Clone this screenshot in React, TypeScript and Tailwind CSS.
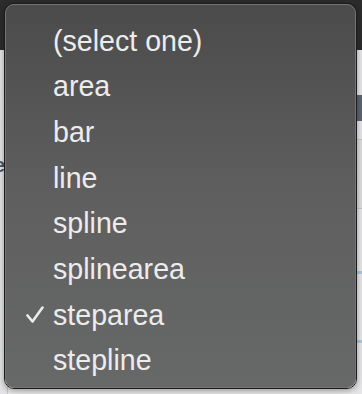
const items = [
  "(select one)",
  "area",
  "bar",
  "line",
  "spline",
  "splinearea",
  "steparea",
  "stepline",
];

const App = () => {
  const selected = "steparea";
  return (
    <div className="relative h-[394px] w-[362px] overflow-hidden bg-[#ebebeb]">
      {/* page behind the popup */}
      <div className="h-[50px] bg-[#2c2c2c]"></div>
      <div className="flex h-[344px] justify-between">
        <div className="w-[8px] border-r border-[#c9c9c9] bg-[#e4e4e6] pt-[105px] font-['Liberation_Sans',sans-serif] text-[20px] font-bold leading-none text-[#4a5566]">
          <span className="-ml-[6px]">e</span>
        </div>
        <div className="flex w-[8px] flex-col bg-[#e6e6e8]">
          <div className="mt-[45px] h-[26px] bg-[#5c6470]"></div>
          <div className="mt-[18px] h-[70px] border-y border-[#c4c4c4] bg-[#dcdcdc]"></div>
          <div className="mt-[62px] h-[3px] bg-[#a9c8df]"></div>
          <div className="mt-[66px] h-[3px] bg-[#a9c8df]"></div>
        </div>
      </div>

      {/* popup menu */}
      <div className="absolute left-[4px] top-[3px] h-[386px] w-[353px] rounded-[10px] border border-[#1c1c1c] shadow-[0_2px_6px_rgba(0,0,0,0.35)]">
        <div className="h-full w-full rounded-[9px] border border-[#747474] bg-gradient-to-b from-[#4b4b4b] via-[#5f5f5f] to-[#676868] pt-[13px] font-['Liberation_Sans',sans-serif]">
          {items.map((item) => (
            <div key={item} className="relative flex h-[45.7px] items-center pl-[47px] text-[28.6px] leading-none text-[#ececec]">
              {item === selected && (
                <svg className="absolute left-[20px] top-[14px]" width="18" height="18" viewBox="0 0 18 18" fill="none">
                  <path d="M1.5 9.5 L6.5 15.5 L16.5 1.5" stroke="#ececec" strokeWidth="2.6" strokeLinecap="round" strokeLinejoin="round" />
                </svg>
              )}
              <span>{item}</span>
            </div>
          ))}
        </div>
      </div>
    </div>
  );
};

export default App;
